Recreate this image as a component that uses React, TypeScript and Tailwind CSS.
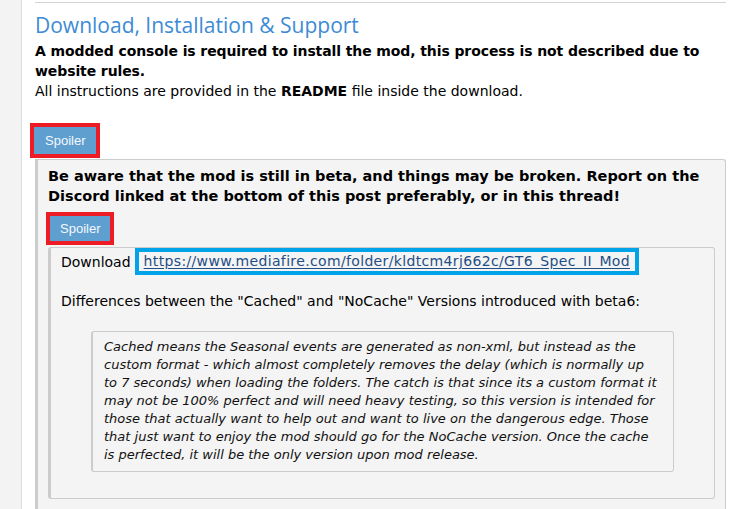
import React from "react";

const verdana = { fontFamily: '"DejaVu Sans", Verdana, sans-serif' };

function SpoilerBtn({ className = "", h = "h-[27px] leading-[27px] px-[11px]" }: { className?: string; h?: string }) {
  return (
    <div className={"flex " + className}>
      <div
        className={"outline outline-4 outline-[#ed1c24] bg-[#5f9fd0] text-[#f4f8fc] text-[13px] " + h}
        style={{ fontFamily: '"Liberation Sans", Arial, sans-serif' }}
      >
        Spoiler
      </div>
    </div>
  );
}

export default function App() {
  return (
    <div className="flex w-[732px] h-[509px] overflow-hidden bg-white" style={verdana}>
      <div className="w-[22px] shrink-0 bg-[#f3f3f3] border-r border-[#dcdcdc]" />
      <div className="flex-1 pl-[13px] pr-[6px] text-black">
        <div className="mt-[2px] h-px bg-[#d3d3d3]" />
        <h2
          className="mt-[6px] text-[21px] leading-[32px] text-[#3d8bd5]"
          style={{ fontFamily: '"Open Sans", "Noto Sans", sans-serif' }}
        >
          Download, Installation &amp; Support
        </h2>
        <p className="text-[14px] leading-[20px] font-bold whitespace-nowrap tracking-[-0.1px]">
          A modded console is required to install the mod, this process is not described due to
          <br />
          website rules.
        </p>
        <p className="text-[14px] leading-[20px] whitespace-nowrap">
          All instructions are provided in the <b>README</b> file inside the download.
        </p>
        <SpoilerBtn className="mt-[26px] ml-[-1px]" />
        <div className="mt-[5px] bg-[#f4f4f4] border border-l-[3px] border-[#cccccc] border-b-0 rounded-tr-[3px] pl-[10px] pr-[10px] pt-[6px] h-[360px]">
          <p className="text-[14.5px] leading-[20px] font-bold whitespace-nowrap">
            Be aware that the mod is still in beta, and things may be broken. Report on the
            <br />
            Discord linked at the bottom of this post preferably, or in this thread!
          </p>
          <SpoilerBtn className="mt-[10px] ml-[2px]" h="h-[25px] leading-[25px] px-[10px]" />
          <div className="mt-[6px] bg-[#f4f4f4] border border-l-[3px] border-[#cccccc] rounded-[3px] pl-[10px] pt-0 pb-[26px] text-[14px] leading-[20px]">
            <div className="flex items-center h-[27px] whitespace-nowrap">
              <span>Download</span>
              <span className="ml-[8px] outline outline-4 outline-[#00a2e8] px-[5px] leading-[19px]">
                <a className="text-[#1f4e86] underline underline-offset-[2px] tracking-[0.35px]">
                  https://www.mediafire.com/folder/kldtcm4rj662c/GT6_Spec_II_Mod
                </a>
              </span>
            </div>
            <p className="mt-[16px] whitespace-nowrap">
              Differences between the "Cached" and "NoCache" Versions introduced with beta6:
            </p>
            <div className="mt-[20px] ml-[30px] w-[583px] border border-l-[2px] border-[#cccccc] rounded-[3px] pl-[11px] pt-[6px] pb-[7px] italic text-[13px] leading-[18px] text-[#111] whitespace-nowrap">
              Cached means the Seasonal events are generated as non-xml, but instead as the
              <br />
              custom format - which almost completely removes the delay (which is normally up
              <br />
              to 7 seconds) when loading the folders. The catch is that since its a custom format it
              <br />
              may not be 100% perfect and will need heavy testing, so this version is intended for
              <br />
              those that actually want to help out and want to live on the dangerous edge. Those
              <br />
              that just want to enjoy the mod should go for the NoCache version. Once the cache
              <br />
              is perfected, it will be the only version upon mod release.
            </div>
          </div>
        </div>
      </div>
    </div>
  );
}
